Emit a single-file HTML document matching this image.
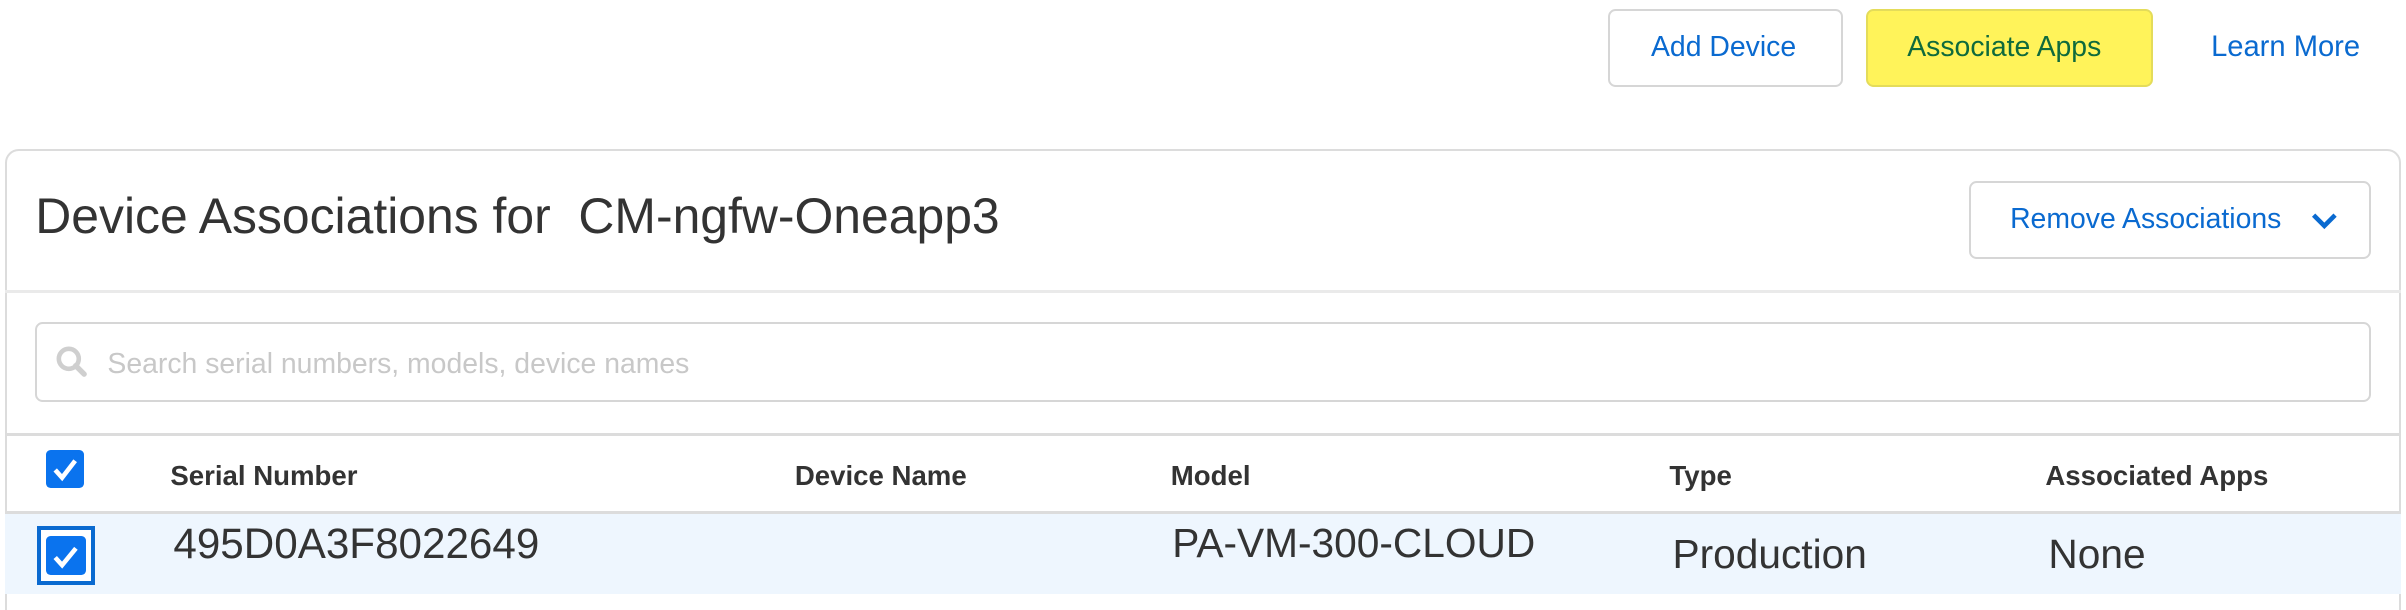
<!DOCTYPE html>
<html><head><meta charset="utf-8"><style>
html,body{margin:0;padding:0;background:#fff;overflow:hidden}
body{width:2406px;height:610px}
#w{zoom:1.5344;position:relative;width:1568px;height:398px;font-family:"Liberation Sans",Arial,sans-serif;color:#333}
.a{position:absolute;white-space:nowrap}
.btn{position:absolute;box-sizing:border-box;border:1.5px solid #d6d6d6;border-radius:5px;background:#fff}
.cb{position:absolute;background:#0a73ee;border-radius:3px}
.hd{font-weight:bold;font-size:18px;color:#333;top:300px}
.rw{font-size:26.5px;color:#333}
</style></head><body><div id="w">
<div class="btn" style="left:1048px;top:6px;width:153px;height:51px"></div>
<div class="a" style="left:1076px;top:20px;font-size:18.5px;color:#0a6ad0">Add Device</div>
<div class="btn" style="left:1216px;top:6px;width:187px;height:51px;background:#fff35a;border-color:#e4dc5a"></div>
<div class="a" style="left:1243px;top:20px;font-size:18.5px;color:#0f6a3c">Associate Apps</div>
<div class="a" style="left:1441px;top:20px;font-size:19px;color:#0a6ad0">Learn More</div>

<div style="position:absolute;left:3px;top:97px;width:1562px;height:320px;box-sizing:border-box;border:1.5px solid #dcdcdc;border-radius:9px"></div>
<div class="a" style="left:23px;top:122px;font-size:32.5px;color:#333">Device Associations for&nbsp; CM-ngfw-Oneapp3</div>
<div class="btn" style="left:1283px;top:118px;width:262px;height:51px"></div>
<div class="a" style="left:1310px;top:132px;font-size:18.5px;color:#0a6ad0">Remove Associations</div>
<svg class="a" style="left:1505px;top:136px" width="20" height="16" viewBox="0 0 20 16"><path d="M3 4 L10 11 L17 4" fill="none" stroke="#0a6ad0" stroke-width="3"/></svg>
<div style="position:absolute;left:3px;top:189px;width:1562px;height:2px;background:#eaeaea"></div>

<div style="position:absolute;left:23px;top:210px;width:1522px;height:52px;box-sizing:border-box;border:1.5px solid #d6d6d6;border-radius:5px"></div>
<svg class="a" style="left:36px;top:225px" width="24" height="24" viewBox="0 0 24 24"><circle cx="9" cy="9" r="6.5" fill="none" stroke="#cfcfcf" stroke-width="3"/><path d="M13.5 13.5 L19 19" stroke="#cfcfcf" stroke-width="3.5" stroke-linecap="round"/></svg>
<div class="a" style="left:70px;top:227px;font-size:18.5px;color:#c8c8c8">Search serial numbers, models, device names</div>

<div style="position:absolute;left:3px;top:282px;width:1562px;height:2px;background:#dcdcdc"></div>
<div class="cb" style="left:30px;top:293px;width:25px;height:25px"></div>
<svg class="a" style="left:30px;top:293px" width="25" height="25" viewBox="0 0 25 25"><path d="M6 13 L10.5 18 L19 7" fill="none" stroke="#fff" stroke-width="3"/></svg>
<div class="a hd" style="left:111px">Serial Number</div>
<div class="a hd" style="left:518px">Device Name</div>
<div class="a hd" style="left:763px">Model</div>
<div class="a hd" style="left:1088px">Type</div>
<div class="a hd" style="left:1333px">Associated Apps</div>
<div style="position:absolute;left:3px;top:333px;width:1562px;height:2px;background:#dcdcdc"></div>
<div style="position:absolute;left:3px;top:335px;width:1562px;height:52px;background:#eef6fe"></div>
<div style="position:absolute;left:24px;top:343px;width:38px;height:38px;box-sizing:border-box;border:3px solid #0a6ad0;background:#fff"></div>
<div class="cb" style="left:30px;top:349px;width:26px;height:26px"></div>
<svg class="a" style="left:30px;top:349px" width="26" height="26" viewBox="0 0 26 26"><path d="M6 14 L10.5 19 L19.5 8" fill="none" stroke="#fff" stroke-width="3"/></svg>
<div class="a rw" style="left:113px;top:339px;font-size:27.5px">495D0A3F8022649</div>
<div class="a rw" style="left:764px;top:339px">PA-VM-300-CLOUD</div>
<div class="a rw" style="left:1090px;top:346px">Production</div>
<div class="a rw" style="left:1335px;top:346px">None</div>
</div></body></html>
